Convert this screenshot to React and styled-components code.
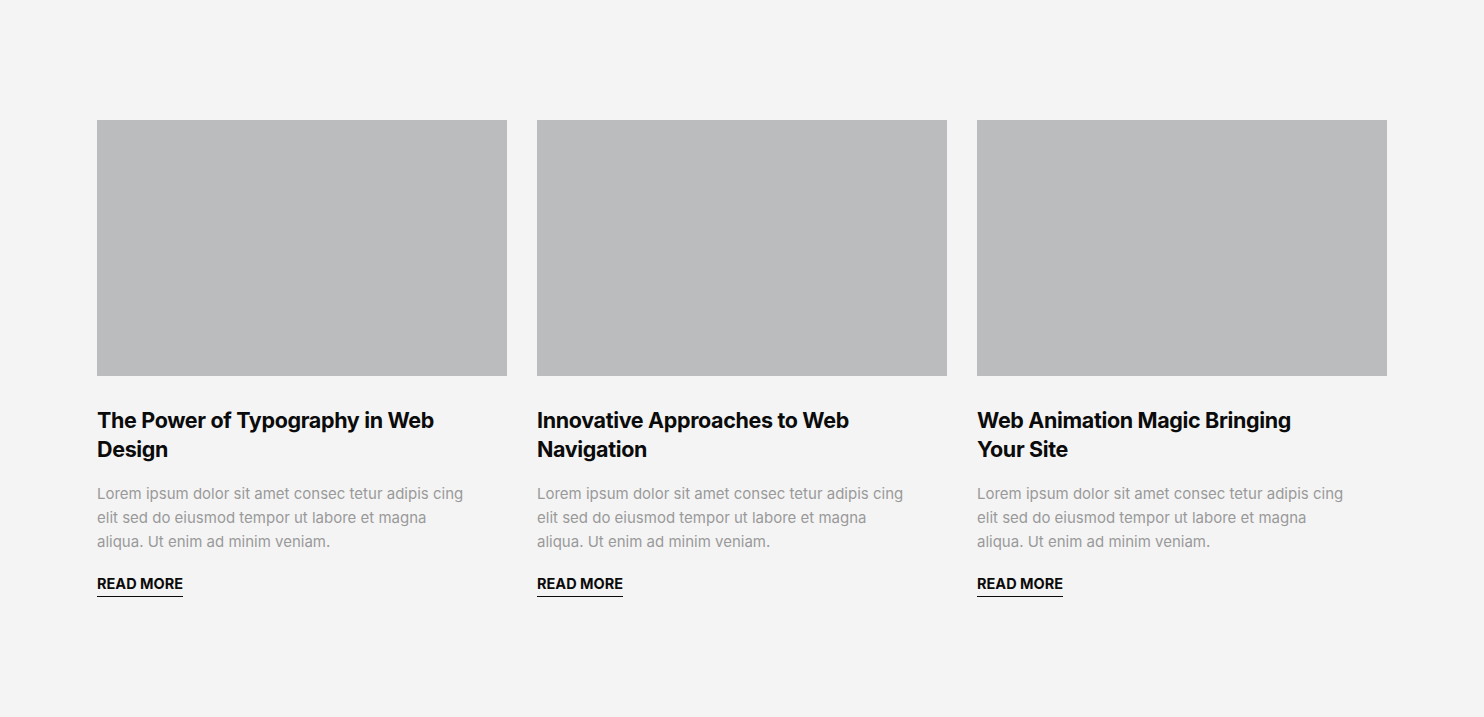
import styled, { createGlobalStyle } from 'styled-components';

const GlobalStyle = createGlobalStyle`
  html, body {
    margin: 0;
    padding: 0;
    background: #f4f4f4;
  }
  body {
    font-family: Inter, "Noto Sans", sans-serif;
  }
`;

const Section = styled.section`
  min-height: 717px;
  box-sizing: border-box;
  padding: 120px 0 0;
  display: flex;
  justify-content: center;
`;

const Grid = styled.div`
  display: grid;
  grid-template-columns: repeat(3, 410px);
  column-gap: 30px;
`;

const Card = styled.article`
  display: flex;
  flex-direction: column;
  align-items: flex-start;
`;

const Thumb = styled.div`
  width: 410px;
  height: 256px;
  background: #bbbcbd;
`;

const Body = styled.div`
  display: flex;
  flex-direction: column;
  align-items: flex-start;
`;

const Title = styled.h3`
  margin: 30px 0 0;
  max-width: 345px;
  font-size: 21.5px;
  line-height: 29px;
  font-weight: 700;
  color: #0b0b0b;
  letter-spacing: -0.35px;
`;

const Excerpt = styled.p`
  margin: 18px 0 0;
  max-width: 372px;
  font-size: 15px;
  line-height: 24px;
  color: #9a9a9a;
`;

const ReadMore = styled.a`
  margin-top: 20px;
  font-size: 14.5px;
  line-height: 20px;
  font-weight: 700;
  color: #0b0b0b;
  text-decoration: none;
  text-transform: uppercase;
  padding-bottom: 2px;
  border-bottom: 1px solid #0b0b0b;
  cursor: pointer;
`;

const posts = [
  { title: 'The Power of Typography in Web Design' },
  { title: 'Innovative Approaches to Web Navigation' },
  { title: 'Web Animation Magic Bringing Your Site' },
];

const excerpt =
  'Lorem ipsum dolor sit amet consec tetur adipis cing elit sed do eiusmod tempor ut labore et magna aliqua. Ut enim ad minim veniam.';

export default function App() {
  return (
    <>
      <GlobalStyle />
      <Section>
        <Grid>
          {posts.map(p => (
            <Card key={p.title}>
              <Thumb />
              <Body>
                <Title>{p.title}</Title>
                <Excerpt>{excerpt}</Excerpt>
                <ReadMore>Read More</ReadMore>
              </Body>
            </Card>
          ))}
        </Grid>
      </Section>
    </>
  );
}
